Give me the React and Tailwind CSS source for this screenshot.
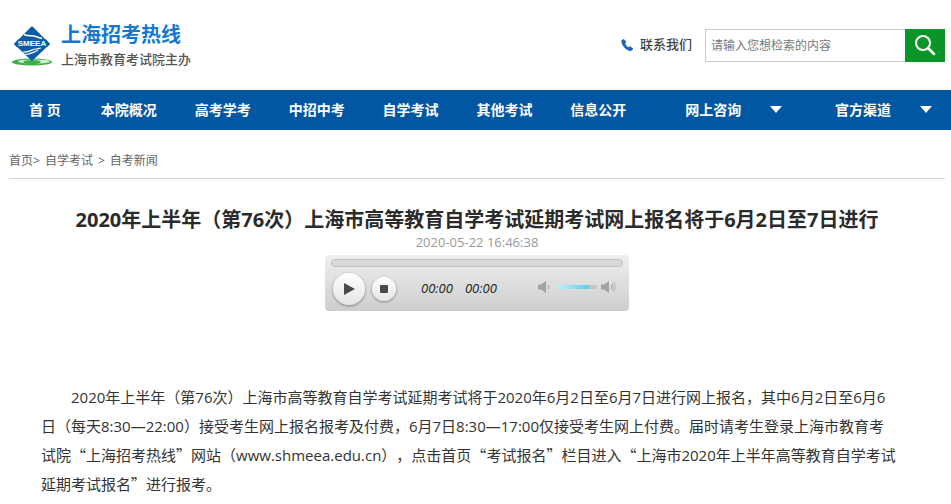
import { useState } from 'react';

const navItems = ['首 页', '本院概况', '高考学考', '中招中考', '自学考试', '其他考试', '信息公开'];
const navMenus = ['网上咨询', '官方渠道'];

function Logo() {
  return (
    <a href="#" className="flex items-center gap-2 pt-1">
      <svg width="42" height="42" viewBox="0 0 42 42" aria-hidden="true">
        <ellipse cx="21" cy="36" rx="20" ry="3.500" fill="#3fb049" />
        <ellipse cx="23" cy="35.500" rx="16" ry="2" fill="#d5f3d5" />
        <ellipse cx="21" cy="36" rx="9" ry="2" fill="#3fb049" />
        <path d="M21 0 39 18 21 35 3 18Z" fill="#0b5aa6" />
        <path d="M13 8.500c4 2 7 1 10 1.500s5 2 8 2.500" stroke="#fff" strokeWidth="1.500" fill="none" />
        <path d="M12 26c6 1 9-3 13-3 3 0 3-1 5-1M14 28.500c6 0 9-3 13-4" stroke="#fff" strokeWidth="1.200" fill="none" />
        <path d="M7 13.500h28l4 4.500-3 3H6l-3-3Z" fill="#0b5aa6" />
        <text
          x="21"
          y="20"
          textAnchor="middle"
          fontSize="8"
          fontWeight="700"
          fill="#fff"
          fontFamily="Liberation Sans, sans-serif"
        >
          SMEEA
        </text>
      </svg>
      <span className="flex flex-col">
        <span className="text-[20px] leading-6 font-bold text-[#1379cf]">上海招考热线</span>
        <span className="text-[13px] leading-6 font-medium text-[#555]">上海市教育考试院主办</span>
      </span>
    </a>
  );
}

function Header() {
  const [keyword, setKeyword] = useState('');

  return (
    <header className="flex h-[90px] items-center justify-between pr-[6px] pl-[11px]">
      <Logo />
      <div className="flex items-center">
        <a href="#" className="mr-[13px] flex items-center gap-[6px] text-[13px] font-medium text-[#444]">
          <svg width="14" height="14" viewBox="0 0 14 14" aria-hidden="true">
            <path
              d="M3.800 1 1.500 2.200C.8 5.500 4.500 11.500 9.800 13c1.600.2 2.800-.8 3.400-2.200L10.200 8.200 8.200 9.300C6.900 8.500 5.900 7.200 5.200 5.500L6.300 4Z"
              fill="#1c62b9"
            />
          </svg>
          联系我们
        </a>
        <form className="flex" onSubmit={(e) => e.preventDefault()}>
          <input
            type="text"
            aria-label="检索"
            value={keyword}
            onChange={(e) => setKeyword(e.target.value)}
            placeholder="请输入您想检索的内容"
            className="h-[33px] w-[200px] border border-r-0 border-[#ccc] px-[5px] text-[12px] outline-none placeholder:text-[#777]"
          />
          <button
            type="submit"
            aria-label="搜索"
            className="flex h-[33px] w-10 items-center justify-center bg-[#0a9529]"
          >
            <svg width="22" height="22" viewBox="0 0 22 22" fill="none" stroke="#fff" strokeWidth="2">
              <circle cx="9" cy="9" r="7" />
              <path d="m14 14 6 6" strokeWidth="2.500" strokeLinecap="round" />
            </svg>
          </button>
        </form>
      </div>
    </header>
  );
}

function NavBar() {
  return (
    <nav className="grid h-10 grid-cols-[74fr_94fr_94fr_94fr_94fr_94fr_94fr_150fr_150fr] items-center bg-[#0257a2] pr-[6px] pb-[2px] pl-2 text-[14px] font-bold text-white">
      {navItems.map((item) => (
        <a key={item} href="#" className="text-center whitespace-nowrap">
          {item}
        </a>
      ))}
      {navMenus.map((item) => (
        <button
          key={item}
          type="button"
          className="flex items-center justify-end gap-[29px] pr-[13px] whitespace-nowrap"
        >
          {item}
          <svg width="12" height="7" viewBox="0 0 12 7" fill="#fff" aria-hidden="true">
            <path d="M0 0h12L6 7Z" />
          </svg>
        </button>
      ))}
    </nav>
  );
}

function Speaker({ loud = false }) {
  return (
    <svg width="15" height="14" viewBox="0 0 15 14" fill="none" aria-hidden="true">
      <path d="M0 4.500h3L8 1v12L3 9.500H0Z" fill="#a3a3a3" />
      <path d="M10 5q2 2 0 4" stroke="#a3a3a3" />
      {loud && <path d="M11 3q2.500 4 0 8M13 2q2.500 5 0 10" stroke="#b3b3b3" />}
    </svg>
  );
}

function AudioPlayer() {
  const [volume, setVolume] = useState(80);
  const round =
    'flex items-center justify-center rounded-full bg-linear-to-b from-white to-[#e4e4e4] shadow-[0_1px_3px_rgba(0,0,0,0.4)]';

  return (
    <div className="h-14 w-[304px] rounded-[4px] bg-linear-to-b from-[#efefef] to-[#cecece] px-[6px] pt-1">
      <div className="h-2 rounded-full border border-[#c2c2c2] bg-[#d9d9d9]" />
      <div className="flex h-[44px] items-center pl-[2px]">
        <button type="button" aria-label="播放" className={`${round} h-8 w-8`}>
          <svg width="11" height="12" viewBox="0 0 11 12" fill="#4a4a45" className="ml-px">
            <path d="M0 0 11 6 0 12Z" />
          </svg>
        </button>
        <button type="button" aria-label="停止" className={`${round} ml-[7px] h-6 w-6`}>
          <svg width="8" height="8" viewBox="0 0 8 8" fill="#4a4a45">
            <rect width="8" height="8" rx="1" />
          </svg>
        </button>
        <span className="ml-[25px] flex gap-3 text-[13px] text-[#222] italic">
          <span>00:00</span>
          <span>00:00</span>
        </span>
        <span className="mr-[7px] mb-1 ml-auto flex items-center gap-1">
          <Speaker />
          <input
            type="range"
            aria-label="音量"
            value={volume}
            onChange={(e) => setVolume(Number(e.target.value))}
            className="h-1 w-10 appearance-none rounded-full bg-[#c4c4c4] bg-linear-to-r from-[#b9f2ff] to-[#58cdea] bg-no-repeat [&::-webkit-slider-thumb]:h-1 [&::-webkit-slider-thumb]:w-1 [&::-webkit-slider-thumb]:appearance-none"
            style={{ backgroundSize: `${volume}% 100%` }}
          />
          <Speaker loud />
        </span>
      </div>
    </div>
  );
}

// Chinese quotation marks take the full-width glyphs of the CJK face
function Quoted({ children }) {
  return (
    <>
      <span className="font-['Noto_Sans_CJK_SC',sans-serif] leading-none">“</span>
      {children}
      <span className="font-['Noto_Sans_CJK_SC',sans-serif] leading-none">”</span>
    </>
  );
}

function Article() {
  return (
    <article>
      <div className="flex flex-col items-center">
        <h1 className="mt-[26px] text-[20px] leading-[30px] font-bold whitespace-nowrap text-[#2b2b2b]">
          2020年上半年（第76次）上海市高等教育自学考试延期考试网上报名将于6月2日至7日进行
        </h1>
        <time className="mb-[6px] text-[13px] leading-[14px] text-[#999]">2020-05-22 16:46:38</time>
        <AudioPlayer />
      </div>
      <p
        lang="zh-CN"
        className="mt-[72px] px-8 indent-[30px] text-[15px] leading-[29px] whitespace-nowrap text-[#333] [text-spacing-trim:space-all]"
      >
        2020年上半年（第76次）上海市高等教育自学考试延期考试将于2020年6月2日至6月7日进行网上报名，其中6月2日至6月6
        <br />
        日（每天8:30—22:00）接受考生网上报名报考及付费，6月7日8:30—17:00仅接受考生网上付费。届时请考生登录上海市教育考
        <br />
        试院<Quoted>上海招考热线</Quoted>网站（www.shmeea.edu.cn），点击首页<Quoted>考试报名</Quoted>栏目进入<Quoted>上海市2020年上半年高等教育自学考试
        <br />
        延期考试报名</Quoted>进行报考。
      </p>
    </article>
  );
}

export default function App() {
  return (
    <div className="min-h-screen bg-white font-['Open_Sans','Noto_Sans_CJK_SC',sans-serif]">
      <Header />
      <NavBar />
      <main className="pr-[6px] pl-[9px]">
        <div className="flex h-[49px] items-end border-b border-[#d5d5d5] pb-[7px] text-[12px] leading-5 text-[#666]">
          <a href="#">首页</a>
          <span>&gt;</span>
          <a href="#" className="ml-[5px]">自学考试</a>
          <span className="mx-[5px]">&gt;</span>
          <a href="#">自考新闻</a>
        </div>
        <Article />
      </main>
    </div>
  );
}
